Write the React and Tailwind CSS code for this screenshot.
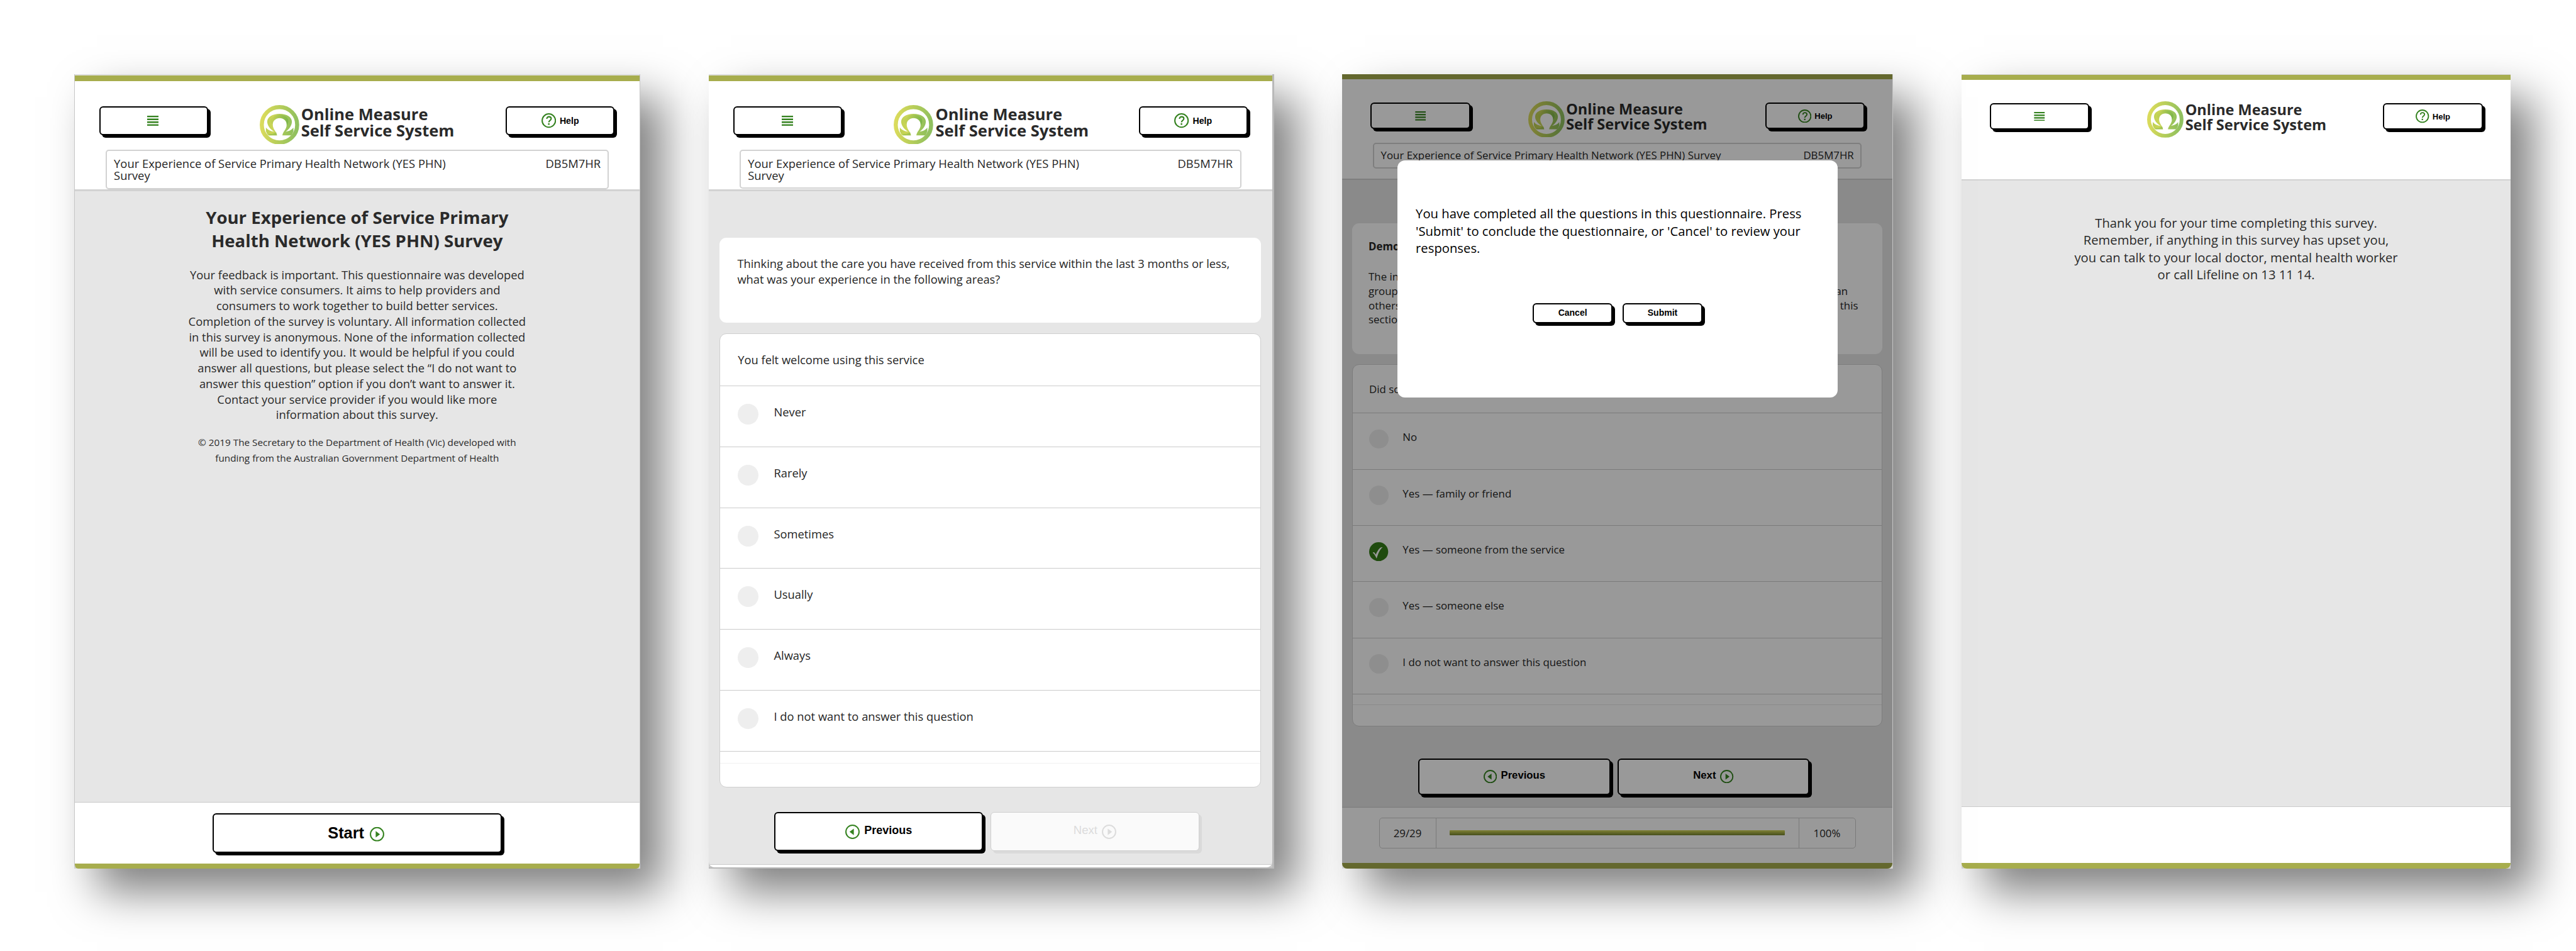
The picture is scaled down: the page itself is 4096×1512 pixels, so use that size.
import { useId } from 'react'

function HelpIcon({ className }) {
  return (
    <svg viewBox="0 0 24 24" className={className} fill="none" stroke="#34821f" strokeWidth="2.1">
      <circle cx="12" cy="12" r="10.9" />
      <path d="M8.7 9.2C8.7 7 10.1 5.8 12.2 5.8s3.700 1.300 3.700 3.200c0 2.600-3.900 2.900-3.900 5.900" strokeWidth="2.1" />
      <path d="M12 16.600v2.400" strokeWidth="2.5" />
    </svg>
  )
}

function ArrowIcon({ className, left }) {
  return (
    <svg viewBox="0 0 24 24" className={className} fill="currentColor">
      <circle cx="12" cy="12" r="10.9" fill="none" stroke="currentColor" strokeWidth="2.1" />
      <path d={left ? 'M14.2 6.7v10.8L7.1 12.1z' : 'M9.8 6.7v10.8l7.1-5.4z'} />
    </svg>
  )
}

function MenuIcon({ className }) {
  return (
    <svg viewBox="0 0 18.4 16" className={className} fill="#34821f">
      <rect width="18.4" height="2.3" />
      <rect y="4.5" width="18.4" height="2.5" />
      <rect y="9" width="18.4" height="2.5" />
      <rect y="13.6" width="18.4" height="2.3" />
    </svg>
  )
}

function OmegaLogo({ className }) {
  const id = useId()
  return (
    <svg viewBox="0 0 100 100" className={className}>
      <defs>
        <linearGradient id={id + 'r'} x1="0" y1="0.45" x2="1" y2="0.55">
          <stop offset="0" stopColor="#dadb5c" />
          <stop offset="0.5" stopColor="#b5cd5a" />
          <stop offset="1" stopColor="#8fc05f" />
        </linearGradient>
        <linearGradient id={id + 'o'} gradientUnits="userSpaceOnUse" x1="16" y1="50" x2="86" y2="50">
          <stop offset="0" stopColor="#bdd052" />
          <stop offset="0.25" stopColor="#ccd657" />
          <stop offset="0.6" stopColor="#a5c757" />
          <stop offset="1" stopColor="#8fc05c" />
        </linearGradient>
        <linearGradient id={id + 'd'} gradientUnits="userSpaceOnUse" x1="34" y1="30" x2="74" y2="46">
          <stop offset="0" stopColor="#9fc14c" stopOpacity="0.3" />
          <stop offset="1" stopColor="#6aae43" />
        </linearGradient>
      </defs>
      <circle cx="50" cy="50" r="44.8" fill="none" stroke={`url(#${id}r)`} strokeWidth="10.3" />
      <path
        fill={`url(#${id}o)`}
        d="M50.2 22.4C32 22.4 19 30.500 19 42.200 19 52 27 62 37 67.500 28.500 66.500 19.500 63 15.600 56.500L15.600 66C17 70 18.500 73.500 22 76.800L43.700 76.800C43 68 33 62 33 49.500 33 40 40.500 33.200 50.400 33.200 60.500 33.200 68.300 40 68.300 49.500 68.300 62 58 68 57.400 76.800L79.500 76.800C82.500 73 84.500 69.500 85.300 66L85.300 57C81.500 63 74 66.500 65.500 67.500 74 62 81.400 52 81.400 42.200 81.400 30.500 68.500 22.400 50.200 22.400z"
      />
      <path
        fill={`url(#${id}d)`}
        opacity="0.75"
        d="M33 31C44 22 62 24 69 32 74 38 73 45 68.300 52 69 40 61 33.200 50.400 33.200 40.500 33.200 33 40 33 49.500 25 43 26 36 33 31z"
      />
      <path fill="#8dbb4a" opacity="0.6" d="M23.500 74C31 74 37 71.500 41.500 69 42.700 71.500 43.500 74 43.700 76.800H23.500z" />
    </svg>
  )
}

function Button({ className, children }) {
  return (
    <button
      className={
        'flex shrink-0 items-center justify-center rounded-[6px] border-2 border-black bg-white font-["Liberation_Sans",Arial,sans-serif] font-bold leading-none text-black shadow-[4px_4px_0_#000] ' +
        className
      }
    >
      {children}
    </button>
  )
}

/* Menu button, logo and help button; the compact form serves the narrower pages. */
function TopBar({ compact, className }) {
  const btn = compact
    ? 'h-[42.3px] w-[158.600px] text-[13.050px]'
    : 'h-[45.800px] w-[173px] text-[14.170px]'
  return (
    <div className={'flex items-start ' + className}>
      <Button className={btn}>
        <MenuIcon className={compact ? 'h-[14.700px] w-[17.500px]' : '-translate-x-[1px] h-[16px] w-[18.400px]'} />
      </Button>
      <div className={compact ? 'ml-[92px] mt-[-2.700px] flex' : 'ml-[82px] mt-[-2.500px] flex'}>
        <OmegaLogo className={compact ? 'h-[57.900px] w-[57.900px]' : 'h-[62.800px] w-[62.800px]'} />
        <div
          className={
            'whitespace-nowrap font-bold text-[#2a2a2a] ' +
            (compact
              ? 'ml-[2.500px] mt-[1.800px] text-[23.500px] leading-[23.600px]'
              : 'ml-[3.100px] mt-[1.800px] text-[25.520px] leading-[26px]')
          }
        >
          Online Measure
          <br />
          Self Service System
        </div>
      </div>
      <Button className={'ml-auto ' + btn}>
        <HelpIcon className={compact ? 'mr-[5.200px] h-[21.400px] w-[21.400px]' : 'mr-[5.800px] h-[23.300px] w-[23.300px]'} />
        Help
      </Button>
    </div>
  )
}

function TitleBox({ className, textClass }) {
  return (
    <div className={'mx-auto flex items-start justify-between rounded-[5px] border-2 border-[#d2d2d2] text-[#262626] ' + className}>
      <div className={textClass}>Your Experience of Service Primary Health Network (YES PHN) Survey</div>
      <div>DB5M7HR</div>
    </div>
  )
}

const pageShadow = 'shadow-[36px_37px_66px_rgba(0,0,0,0.5)]'

function IntroPage() {
  return (
    <section className={'ml-[117.500px] h-[1263px] w-[900.700px] shrink-0 bg-[#d2d2d2] ' + pageShadow}>
      <div className="flex h-full flex-col overflow-hidden rounded-b-[6px] border-x border-[#c6c6c6] bg-white">
        <div className="h-[2px] bg-[#dedede]" />
        <div className="h-[9px] bg-[#a7ad4d]" />
        <header className="h-[175.500px] border-b-3 border-[#d2d2d2] pt-[40.500px]">
          <TopBar className="h-[69.400px] pl-[39.300px] pr-[40px]" />
          <TitleBox
            className="h-[62.600px] w-[799.600px] pl-[11px] pr-[10.500px] pt-[11px] text-[18.400px] leading-[18.500px]"
            textClass="w-[560px]"
          />
        </header>
        <main className="flex-1 bg-[#e6e6e6] text-center text-[#2a2a2a]">
          <h1 className="mt-[22.600px] text-[27.600px] font-bold leading-[37.400px]">
            Your Experience of Service Primary
            <br />
            Health Network (YES PHN) Survey
          </h1>
          <p className="mt-[23.300px] text-[18.380px] leading-[24.730px]">
            Your feedback is important. This questionnaire was developed
            <br />
            with service consumers. It aims to help providers and
            <br />
            consumers to work together to build better services.
            <br />
            Completion of the survey is voluntary. All information collected
            <br />
            in this survey is anonymous. None of the information collected
            <br />
            will be used to identify you. It would be helpful if you could
            <br />
            answer all questions, but please select the “I do not want to
            <br />
            answer this question” option if you don’t want to answer it.
            <br />
            Contact your service provider if you would like more
            <br />
            information about this survey.
          </p>
          <p className="mt-[19.400px] text-[15.310px] leading-[24.700px]">
            © 2019 The Secretary to the Department of Health (Vic) developed with
            <br />
            funding from the Australian Government Department of Health
          </p>
        </main>
        <footer className="flex h-[97.500px] justify-center border-t border-[#c8c8c8] bg-white pt-[17.400px]">
          <Button className="h-[63px] w-[459.500px] text-[25.400px]">
            <span className="-ml-[3px] mr-[9.400px]">Start</span>
            <ArrowIcon className="h-[23px] w-[23px] translate-y-[1.800px] text-[#34821f]" />
          </Button>
        </footer>
        <div className="h-[8px] bg-[#a7ad4d]" />
      </div>
    </section>
  )
}

function QuestionPage() {
  const options = ['Never', 'Rarely', 'Sometimes', 'Usually', 'Always', 'I do not want to answer this question']
  return (
    <section className={'ml-[108.500px] h-[1263px] w-[899px] shrink-0 bg-[#b9b9b9] pb-[2px] pr-[3px] ' + pageShadow}>
      <div className="h-full bg-[#c9c9c9]">
        <div className="flex h-full flex-col overflow-hidden rounded-b-[9px] bg-[#e6e6e6] text-[18.330px] text-[#262626]">
          <div className="h-[2px] bg-[#dedede]" />
          <div className="h-[9px] bg-[#a7ad4d]" />
          <header className="h-[175px] border-b-3 border-[#d2d2d2] bg-white pt-[40.500px]">
            <TopBar className="h-[69.400px] pl-[39.800px] pr-[38.900px]" />
            <TitleBox
              className="h-[62.100px] w-[797.700px] pl-[11.300px] pr-[11.500px] pt-[10.700px] text-[18.360px] leading-[18.500px]"
              textClass="w-[560px]"
            />
          </header>
          <main className="flex flex-1 flex-col px-[17.400px] pt-[74.700px]">
            <div className="h-[134.400px] rounded-[11px] bg-white pl-[28.300px] pt-[28.900px] leading-[24.700px]">
              Thinking about the care you have received from this service within the last 3 months or less,
              <br />
              what was your experience in the following areas?
            </div>
            <div className="mt-[17.200px] h-[722.700px] rounded-[11px] border border-[#cfcfcf] bg-white">
              <div className="flex h-[82px] items-center pb-[0.800px] pl-[28.200px]">You felt welcome using this service</div>
              {options.map((o) => (
                <div key={o} className="flex h-[96.900px] items-start border-t border-[#cbcbcb] pl-[28.200px]">
                  <div className="mt-[28px] h-[33px] w-[33px] rounded-full bg-[#eeeeee]" />
                  <div className="ml-[24.200px] mt-[29px] leading-[24px]">{o}</div>
                </div>
              ))}
              <div className="h-[20px] border-y border-t-[#cbcbcb] border-b-[#f0f0f0]" />
            </div>
            <div className="mt-[38.300px] flex gap-[11.700px] pl-[87.200px]">
              <Button className="h-[62.500px] w-[331.800px] text-[18px]">
                <ArrowIcon left className="mr-[7px] h-[23px] w-[23px] text-[#34821f]" />
                <span className="-translate-y-[1.600px]">Previous</span>
              </Button>
              <button className="flex h-[62.500px] w-[332.200px] items-center justify-center rounded-[6px] border border-[#cfcfcf] bg-[#fafafa] font-['Liberation_Sans',Arial,sans-serif] text-[18.500px] leading-none text-[#dcdcdc] shadow-[4px_4px_0_#dadada]">
                <span className="-translate-y-[1.600px]">Next</span>
                <ArrowIcon className="ml-[7px] h-[23px] w-[23px]" />
              </button>
            </div>
          </main>
          <div className="h-[4.800px] border-t border-[#cbcbcb] bg-white" />
        </div>
      </div>
    </section>
  )
}

function ConfirmPage() {
  const options = [
    'No',
    'Yes — family or friend',
    'Yes — someone from the service',
    'Yes — someone else',
    'I do not want to answer this question',
  ]
  return (
    <section className={'relative ml-[108.600px] h-[1263px] w-[875.500px] shrink-0 border-r border-[#c4c4c4] bg-[#d6d6d6] ' + pageShadow}>
      <div className="relative flex h-full flex-col overflow-hidden rounded-b-[8px] bg-[#e6e6e6] text-[16.860px] text-[#262626]">
        <div className="h-[8.500px] bg-[#a7ad4d]" />
        <header className="h-[160.200px] border-b-2 border-[#d2d2d2] bg-white pt-[37.200px]">
          <TopBar compact className="h-[63.500px] pl-[44.900px] pr-[43.400px]" />
          <TitleBox
            className="h-[41.200px] w-[777.500px] pl-[10.700px] pr-[10.500px] pt-[9.800px] leading-[17px]"
            textClass="whitespace-nowrap"
          />
        </header>
        <main className="flex flex-1 flex-col px-[15.800px] pt-[69px]">
          <div className="h-[208.300px] rounded-[11px] bg-white pl-[26px] pr-[38.500px] pt-[26.100px] leading-[22.800px]">
            <div className="font-bold">Demographics</div>
            <div className="mt-[25px]">The information in this section helps us to know if we</div>
            <div className="flex justify-between pr-[16.400px]">
              <span>groups</span>
              <span>than</span>
            </div>
            <div className="flex justify-between">
              <span>others</span>
              <span>this</span>
            </div>
            <div>section</div>
          </div>
          <div className="mt-[16px] h-[576px] rounded-[11px] border border-[#d0d0d0] bg-white">
            <div className="flex h-[76px] items-center pl-[26px]">Did someone help you complete this survey?</div>
            {options.map((o, i) => (
              <div key={o} className="flex h-[89.300px] items-start border-t border-[#cbcbcb] pl-[26.200px]">
                {i === 2 ? (
                  <svg viewBox="0 0 38 38" className="mt-[25.600px] h-[30.300px] w-[30.300px]">
                    <circle cx="19" cy="19" r="19" fill="#347e18" />
                    <path
                      fill="#fff"
                      d="M7 21.300c1.300-1.500 3-1.500 4-.1l2.400 3.500C16 18.500 19.500 13 22.500 11c1.500-1 3.500-1.200 4.200-.7-5 3.700-8.700 12.200-11.700 22.200C12.800 28.500 10 22 7 21.300z"
                    />
                  </svg>
                ) : (
                  <div className="mt-[25.600px] h-[30.300px] w-[30.300px] rounded-full bg-[#ededed]" />
                )}
                <div className="ml-[22.800px] mt-[26.900px] leading-[22px]">{o}</div>
              </div>
            ))}
            <div className="h-[18px] border-y border-t-[#cbcbcb] border-b-[#e6e6e6]" />
          </div>
          <div className="mt-[50.600px] flex gap-[10.800px] pl-[105.100px]">
            <Button className="h-[57.500px] w-[305.700px] text-[16.700px]">
              <ArrowIcon left className="mr-[6.200px] h-[21.300px] w-[21.300px] text-[#34821f]" />
              <span className="-translate-y-[1.400px]">Previous</span>
            </Button>
            <Button className="h-[57.500px] w-[305.700px] text-[16.700px]">
              <span className="-translate-y-[1.400px]">Next</span>
              <ArrowIcon className="ml-[7px] h-[21.300px] w-[21.300px] text-[#34821f]" />
            </Button>
          </div>
        </main>
        <footer className="h-[89.500px] border-t border-[#cbcbcb] bg-white pt-[16.300px]">
          <div className="mx-auto flex h-[49px] w-[758px] items-stretch rounded-[5px] border border-[#cbcbcb]">
            <div className="flex w-[90px] items-center justify-center border-r border-[#cbcbcb]">29/29</div>
            <div className="flex flex-1 items-center px-[21.500px]">
              <div className="h-[8px] w-full rounded-[1px] bg-linear-to-b from-[#d6d95a] to-[#78842f]" />
            </div>
            <div className="flex w-[90px] items-center justify-center border-l border-[#cbcbcb]">100%</div>
          </div>
        </footer>
        <div className="h-[8.500px] bg-[#a7ad4d]" />
        <div className="absolute inset-0 bg-black/40" />
        <div className="absolute left-[87.300px] top-[137.300px] h-[377.600px] w-[700.300px] rounded-[12px] bg-white pl-[29.500px] pt-[71.300px] text-[20.260px] leading-[27.400px] text-black">
          You have completed all the questions in this questionnaire. Press
          <br />
          'Submit' to conclude the questionnaire, or 'Cancel' to review your
          <br />
          responses.
          <div className="mt-[74.100px] flex gap-[16.400px] pl-[186.300px]">
            <Button className="h-[32px] w-[126.500px] text-[14px]">
              <span className="-translate-y-[1px]">Cancel</span>
            </Button>
            <Button className="h-[32px] w-[126.500px] text-[14px]">
              <span className="-translate-y-[1px]">Submit</span>
            </Button>
          </div>
        </div>
      </div>
    </section>
  )
}

function ThanksPage() {
  return (
    <section className={'ml-[109.100px] h-[1263px] w-[873.300px] shrink-0 bg-[#d2d2d2] ' + pageShadow}>
      <div className="flex h-full flex-col overflow-hidden rounded-b-[8px] bg-white">
        <div className="h-[1px] bg-[#d6d6d6]" />
        <div className="h-[8.500px] bg-[#a7ad4d]" />
        <header className="h-[160.200px] border-b-2 border-[#d2d2d2] pt-[36.900px]">
          <TopBar compact className="pl-[44.800px] pr-[44.300px]" />
        </header>
        <main className="flex-1 bg-[#e6e6e6] pt-[53.500px] text-center text-[20.230px] leading-[27.400px] text-[#2a2a2a]">
          Thank you for your time completing this survey.
          <br />
          Remember, if anything in this survey has upset you,
          <br />
          you can talk to your local doctor, mental health worker
          <br />
          or call Lifeline on 13 11 14.
        </main>
        <footer className="h-[90px] border-t border-[#cbcbcb] bg-white" />
        <div className="h-[9px] bg-[#a7ad4d]" />
      </div>
    </section>
  )
}

export default function App() {
  return (
    <div className="flex h-[1512px] w-[4096px] items-start overflow-hidden bg-white pt-[117.500px] font-['Open_Sans',sans-serif]">
      <IntroPage />
      <QuestionPage />
      <ConfirmPage />
      <ThanksPage />
    </div>
  )
}
